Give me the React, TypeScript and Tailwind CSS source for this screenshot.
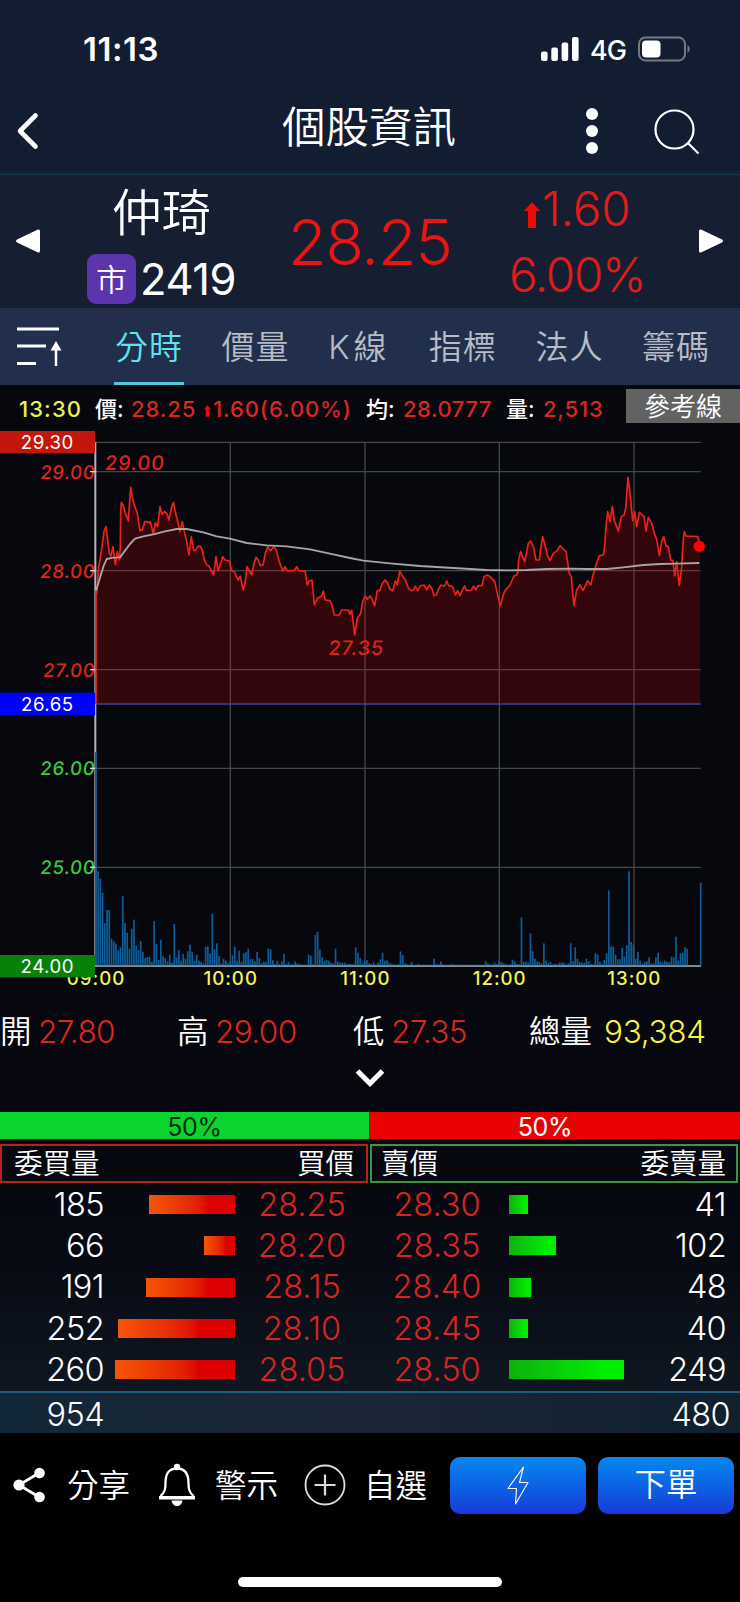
const tabs = ['分時', '價量', 'K線', '指標', '法人', '籌碼'];

const buys = [
  { qty: 185, price: '28.25' },
  { qty: 66, price: '28.20' },
  { qty: 191, price: '28.15' },
  { qty: 252, price: '28.10' },
  { qty: 260, price: '28.05' },
];

const sells = [
  { qty: 41, price: '28.30' },
  { qty: 102, price: '28.35' },
  { qty: 48, price: '28.40' },
  { qty: 40, price: '28.45' },
  { qty: 249, price: '28.50' },
];

// px per lot in the depth bars
const LOT = 0.4635;

// Chart units are 1/3 px
const priceLine =
  '290,645 296,560 300,540 306,500 312,455 318,440 323,480 328,520 333,528 339,500 346,555 352,515 358,540 361,500 362,400 364,367 369,375 376,400 385,422 392,322 399,362 405,380 412,400 420,452 427,450 434,425 440,425 446,428 451,425 460,462 466,428 473,440 480,380 486,403 493,395 500,400 507,420 514,385 520,367 527,400 533,425 540,455 547,425 553,455 560,485 567,525 574,470 581,512 588,510 594,498 602,500 608,515 613,540 620,555 627,558 634,572 641,585 648,530 654,572 662,550 668,530 675,540 688,543 695,572 703,575 709,590 715,600 721,588 729,630 735,610 741,560 755,585 761,555 768,532 775,540 781,557 789,555 796,520 803,500 812,512 822,498 830,515 838,545 848,572 855,560 862,572 882,572 890,560 897,572 915,573 918,590 922,615 928,603 936,600 943,675 952,655 965,648 970,633 976,660 990,662 996,675 1003,705 1018,705 1025,690 1046,690 1050,703 1055,690 1064,765 1072,715 1082,700 1088,665 1096,648 1102,658 1110,648 ' +
  '1115,655 1124,677 1132,632 1139,632 1146,612 1155,600 1162,608 1170,628 1178,632 1186,603 1192,615 1199,573 1208,590 1215,597 1225,625 1234,632 1240,630 1246,618 1253,632 1260,618 1272,615 1280,630 1288,615 1295,625 1302,647 1309,645 1315,628 1323,615 1334,618 1340,603 1346,617 1358,620 1366,645 1373,632 1380,647 1387,630 1394,618 1400,632 1414,630 1421,618 1427,630 1434,617 1446,617 1452,590 1462,585 1470,590 1484,605 1492,640 1501,677 1508,650 1515,632 1530,615 1542,588 1550,585 1554,575 1556,540 1562,515 1574,545 1585,490 1592,483 1600,500 1608,540 1618,540 1623,500 1628,470 1634,492 1642,525 1650,542 1660,520 1672,512 1680,497 1690,508 1698,515 1708,580 1714,590 1717,630 1722,677 1730,630 1740,615 1749,632 1763,602 1772,615 1778,590 1788,555 1798,527 1810,525 1814,500 1818,440 1823,395 1830,425 1837,380 1843,422 1855,453 1864,410 1872,405 1877,385 1884,292 1890,340 1898,422 1904,395 1910,440 1918,397 1926,405 1932,408 1938,453 1945,412 1955,430 1963,460 1970,478 1978,527 1985,485 1991,470 1998,497 2005,500 2012,540 2019,542 2024,588 2030,545 2038,617 2045,560 2050,475 2053,455 2058,468 2093,470 2098,485';

const avgLine =
  '288,632 295,610 310,560 320,537 340,533 360,532 375,512 390,492 405,476 430,469 460,463 495,454 530,447 560,447 610,457 650,469 690,476 740,489 800,496 860,499 930,508 1000,523 1050,534 1090,542 1170,550 1260,558 1360,564 1460,570 1530,571 1580,570 1640,567 1710,566 1760,567 1820,567 1870,562 1930,555 1980,552 2030,551 2098,549';

// One value per minute, 09:00 to 13:30
const volumes = [
  640, 282, 260, 218, 126, 166, 166, 80, 72, 65, 45, 54, 208, 126, 98, 50, 110, 137, 60, 45,
  73, 40, 22, 25, 26, 10, 133, 64, 16, 77, 28, 22, 12, 32, 8, 124, 24, 46, 14, 34,
  20, 42, 62, 40, 14, 32, 14, 10, 6, 56, 57, 36, 155, 48, 66, 28, 6, 20, 14, 6,
  10, 30, 56, 14, 44, 10, 36, 40, 50, 18, 20, 12, 40, 22, 6, 10, 10, 50, 48, 16,
  4, 14, 4, 12, 34, 4, 10, 3, 3, 12, 6, 4, 2, 2, 3, 32, 28, 4, 92, 100,
  48, 24, 12, 16, 14, 8, 6, 50, 12, 8, 8, 8, 4, 4, 4, 4, 54, 38, 22, 6,
  12, 16, 7, 4, 9, 3, 8, 18, 38, 14, 15, 8, 5, 3, 2, 4, 42, 30, 6, 4,
  3, 10, 2, 2, 4, 2, 2, 2, 2, 2, 2, 20, 4, 3, 12, 3, 2, 2, 2, 4,
  2, 2, 2, 2, 2, 2, 2, 2, 2, 2, 2, 2, 2, 2, 13, 6, 3, 3, 8, 4,
  14, 10, 6, 4, 2, 3, 17, 12, 4, 4, 144, 10, 10, 8, 96, 42, 20, 12, 10, 6,
  66, 14, 7, 10, 3, 5, 3, 8, 8, 8, 3, 6, 66, 12, 54, 20, 10, 8, 7, 20,
  12, 4, 3, 36, 32, 10, 4, 16, 36, 225, 56, 56, 32, 18, 18, 52, 26, 60, 282, 70,
  62, 20, 40, 14, 5, 10, 12, 24, 6, 6, 24, 38, 12, 8, 14, 10, 10, 26, 24, 86,
  14, 36, 38, 54, 50, 0, 0, 0, 0, 0, 248,
];

const axis = [
  { label: '29.00', y: 275, color: '#e2231d' },
  { label: '28.00', y: 572, color: '#e2231d' },
  { label: '27.00', y: 869, color: '#e2231d' },
  { label: '26.00', y: 1165, color: '#3cc844' },
  { label: '25.00', y: 1462, color: '#3cc844' },
];

const tags = [
  { label: '29.30', y: 153, color: '#c4170b' },
  { label: '26.65', y: 938, color: '#0000ff' },
  { label: '24.00', y: 1725, color: '#078207' },
];

const hours = [
  { label: '09:00', x: 288 },
  { label: '10:00', x: 692 },
  { label: '11:00', x: 1096 },
  { label: '12:00', x: 1499 },
  { label: '13:00', x: 1903 },
];

function UpArrow({ className }: { className?: string }) {
  return (
    <svg viewBox="0 0 16 26" className={className} fill="#f00b0b">
      <path d="M8 0 16 9H12V26H4V9H0Z" />
    </svg>
  );
}

function StatusBar() {
  return (
    <div className="flex h-[86px] items-start pt-[34px]">
      <span className="mt-[-1px] ml-[83px] w-[120px] text-[33px] leading-8 font-semibold tracking-[0.5px]">11:13</span>
      <svg viewBox="0 0 39 24" className="mt-[3px] ml-[338px] h-6 w-[39px]" fill="#fff">
        <rect x="0" y="14.5" width="6.6" height="9.5" rx="2" />
        <rect x="10.3" y="10.5" width="6.6" height="13.5" rx="2" />
        <rect x="20.6" y="5.5" width="6.6" height="18.5" rx="2" />
        <rect x="31" y="0" width="6.6" height="24" rx="2" />
      </svg>
      <span className="ml-[10px] w-[37px] text-[27px] leading-[34px] font-medium tracking-[-1px]">4G</span>
      <svg viewBox="0 0 54 26" className="mt-[2px] ml-[11px] h-[26px] w-[54px]" fill="none">
        <rect x="1" y="1.5" width="46" height="23" rx="6.5" stroke="#737986" strokeWidth="2" />
        <rect x="4" y="4.5" width="18.5" height="17" rx="4" fill="#fff" />
        <path d="M49.5 9Q54 13 49.5 17Z" fill="#737986" />
      </svg>
    </div>
  );
}

function Header() {
  return (
    <div className="flex h-[89px] items-start border-b-2 border-[#12304a]">
      <svg viewBox="0 0 24 38" className="mt-[26px] ml-[16px] h-[38px] w-6" fill="none" stroke="#fff" strokeWidth="4.6" strokeLinecap="round" strokeLinejoin="round">
        <path d="M19.5 3.5 4 19 19.5 34.5" />
      </svg>
      <h1 className="mt-[19px] ml-[242px] w-[176px] text-[43.5px] leading-[44px] font-[350] whitespace-nowrap">個股資訊</h1>
      <svg viewBox="0 0 12 48" className="mt-[21px] ml-[128px] h-12 w-3" fill="#fff">
        <circle cx="6" cy="7" r="6" />
        <circle cx="6" cy="24" r="6" />
        <circle cx="6" cy="41" r="6" />
      </svg>
      <svg viewBox="0 0 46 46" className="mt-[23px] ml-[56px] h-[46px] w-[46px]" fill="none" stroke="#fff" strokeWidth="2.2">
        <circle cx="20.5" cy="20.5" r="19" />
        <path d="m34 34 10.5 10.5" />
      </svg>
    </div>
  );
}

function Quote() {
  return (
    <div className="flex h-[133px] items-center bg-[#161e31]">
      <svg viewBox="0 0 24 24" className="mt-[-2px] ml-4 h-6 w-6" fill="#fff">
        <path d="M22 .5Q24 0 24 2V22Q24 24 22 23.5L1 13.5Q-1 12 1 10.5Z" />
      </svg>
      <div className="ml-[47px] flex w-[152px] flex-col">
        <div className="mt-[-3px] ml-[25px] h-[78px] pt-[14px] text-[49.5px] leading-[49px] font-[350] whitespace-nowrap">仲琦</div>
        <div className="flex h-[52px] items-center">
          <span className="flex h-[50px] w-[49px] items-center justify-center rounded-[9px] bg-[#5c34ad] text-[31px] leading-none font-[350]">市</span>
          <span className="mt-[2px] ml-[4px] text-[43.5px] leading-none tracking-[-0.4px]">2419</span>
        </div>
      </div>
      <span className="mt-[2px] ml-[49px] w-[181px] text-[63px] leading-none font-[350] tracking-[-1.2px] text-[#ea1410]">28.25</span>
      <div className="ml-[40px] flex w-[150px] flex-col text-[#e41a18]">
        <div className="flex h-[66px] items-center pl-[15px]">
          <UpArrow className="mt-[12px] h-[26px] w-4" />
          <span className="ml-[2px] text-[47.5px] leading-none font-[350] tracking-[-0.1px]">1.60</span>
        </div>
        <span className="h-[66px] text-[47.5px] leading-[65px] font-[350] tracking-[-1.2px]">6.00%</span>
      </div>
      <svg viewBox="0 0 24 24" className="mt-[-2px] ml-[40px] h-6 w-6 flex-none" fill="#fff">
        <path d="M2 .5Q0 0 0 2V22Q0 24 2 23.5L23 13.5Q25 12 23 10.5Z" />
      </svg>
    </div>
  );
}

function Tabs() {
  return (
    <div className="flex h-[77px] bg-[#222f4c]">
      <svg viewBox="0 0 46 40" className="mt-[19px] ml-4 h-10 w-[46px] flex-none" fill="none" stroke="#fff" strokeWidth="3">
        <path d="M1 2H43M1 19H30M1 36.5H20" />
        <path d="M40 39V20" strokeWidth="2.5" />
        <path d="M40 14 45.5 23.5H34.5Z" fill="#fff" stroke="none" />
      </svg>
      <div className="ml-[52px] flex gap-[36.6px] text-[33px] font-[350] whitespace-nowrap text-[#b8bcc5]">
        {tabs.map((tab, i) => (
          <span
            key={tab}
            className={
              i === 0
                ? 'w-[70px] border-b-[3px] border-[#4fc9dd] pt-[21px] pl-[1px] leading-9 tracking-[1px] text-[#5fe3f3]'
                : i === 2
                  ? 'w-[64px] pt-[21px] pl-[1px] leading-9 tracking-[4px]'
                  : 'w-[70px] pt-[21px] pl-[1px] leading-9 tracking-[1px]'
            }
          >
            {tab}
          </span>
        ))}
      </div>
    </div>
  );
}

function Chart() {
  return (
    <svg viewBox="0 153 2220 1707" className="block h-[569px] w-[740px]">
      <g stroke="#45474b" strokeWidth="4">
        {[187, 275, 572, 869, 1165, 1462].map((y) => (
          <path key={y} d={`M287 ${y}H2102`} />
        ))}
        {[691, 1095, 1498, 1902].map((x) => (
          <path key={x} d={`M${x} 187V1758`} />
        ))}
      </g>
      <path d="M286 187V1758" stroke="#b5b5b8" strokeWidth="6" />
      <path d="M284 1758H2103" stroke="#b5b5b8" strokeWidth="5" />
      <polygon points={`290,972 ${priceLine} 2100,500 2100,972`} fill="#ff0000" fillOpacity=".18" />
      <path d="M287 972H2102" stroke="#454296" strokeWidth="5" />
      <path d="M288 972V630" stroke="#e01c18" strokeWidth="5" />
      <polyline points={priceLine} fill="none" stroke="#ef211b" strokeWidth="5" strokeLinejoin="round" />
      <polyline points={avgLine} fill="none" stroke="#a9a5a6" strokeWidth="5.5" strokeLinejoin="round" />
      <circle cx="2098" cy="499" r="17" fill="#f50505" />
      {volumes.map((v, i) => (
        <rect key={i} x={285 + i * 6.72} y={1756 - v} width="5.2" height={v} fill="#0c5c97" />
      ))}
      <g fontSize="56" fontWeight="450" textAnchor="end" letterSpacing="2">
        {axis.map((a) => (
          <g key={a.label}>
            <text transform={`translate(285 ${a.y + 21}) skewX(-6)`} fill={a.color}>
              {a.label}
            </text>
            <path d={`M270 ${a.y}H286`} stroke="#d5d5d5" strokeWidth="4" />
          </g>
        ))}
      </g>
      <g fontSize="60" fontWeight="450" fill="#dd211c" letterSpacing="2.5">
        <text transform="translate(313 269) skewX(-6)">29.00</text>
        <text transform="translate(983 826) skewX(-6)">27.35</text>
      </g>
      <g fontSize="56" fontWeight="500" fill="#f3f35a" textAnchor="middle" letterSpacing="3">
        {hours.map((h) => (
          <text key={h.label} x={h.x} y="1814">
            {h.label}
          </text>
        ))}
      </g>
      {tags.map((t) => (
        <g key={t.label}>
          <rect x="0" y={t.y} width="285" height="67" fill={t.color} />
          <text x="142" y={t.y + 55} fontSize="56" fill="#fff" textAnchor="middle" letterSpacing="1.5">
            {t.label}
          </text>
        </g>
      ))}
    </svg>
  );
}

function ChartInfo() {
  return (
    <div className="flex h-[46px] items-start text-[22px] leading-7 font-medium whitespace-nowrap text-[#dd2521]">
      <span className="mt-[10px] ml-[19px] w-[76px] tracking-[1.1px] text-[#e9f04a]">13:30</span>
      <span className="mt-[10px] w-[36px] text-white">價:</span>
      <span className="mt-[10px] w-[73px] tracking-[0.9px]">28.25</span>
      <UpArrow className="mt-[20px] h-3 w-[7px]" />
      <span className="mt-[10px] ml-[2px] w-[153px] tracking-[0.9px]">1.60(6.00%)</span>
      <span className="mt-[10px] w-[37px] text-white">均:</span>
      <span className="mt-[10px] w-[103px] tracking-[0.5px]">28.0777</span>
      <span className="mt-[10px] w-[37px] text-white">量:</span>
      <span className="mt-[10px] w-[83px] tracking-[0.8px]">2,513</span>
      <button className="mt-[4px] h-[34px] flex-1 bg-[#626262] text-[26px] leading-[36px] font-[350] text-white">參考線</button>
    </div>
  );
}

function Summary() {
  return (
    <div className="flex h-[112px] flex-col bg-[#06070f]">
      <div className="flex h-[64px] items-center text-[31.5px] leading-none font-[350] whitespace-nowrap">
        <span className="w-[38px]">開</span>
        <span className="w-[139px] tracking-[-0.6px] text-[#dd2521]">27.80</span>
        <span className="w-[38px]">高</span>
        <span className="w-[138px] tracking-[-0.6px] text-[#dd2521]">29.00</span>
        <span className="w-[38px]">低</span>
        <span className="w-[138px] tracking-[-0.6px] text-[#dd2521]">27.35</span>
        <span className="w-[75px]">總量</span>
        <span className="tracking-[-0.3px] text-[#f5f53a]">93,384</span>
      </div>
      <svg viewBox="0 0 30 20" className="mx-auto mt-[4px] h-5 w-[30px]" fill="none" stroke="#fff" strokeWidth="5">
        <path d="M2.5 3 15 15.5 27.5 3" />
      </svg>
    </div>
  );
}

function Depth() {
  return (
    <div className="bg-linear-to-b from-[#05060d] via-[#080b14] to-[#111c27]">
      <div className="flex h-[27px] text-center text-[25px] leading-[31px] font-[370]">
        <span className="w-[369px] bg-[#09d52e] pl-[20px] tracking-[-0.3px] text-[#06280c]">50%</span>
        <span className="flex-1 bg-[#ea0000] pr-[19px] tracking-[-0.3px]">50%</span>
      </div>
      <div className="mt-[5px] flex h-[39px] gap-[2px] pr-[2px] text-[28.5px] leading-[36px] font-[350]">
        <div className="flex w-[368px] justify-between border-2 border-[#b8201f] pr-[12px] pl-[12px]">
          <span>委買量</span>
          <span>買價</span>
        </div>
        <div className="flex w-[368px] justify-between border-2 border-[#2f9a40] pr-[10px] pl-[9px]">
          <span>賣價</span>
          <span>委賣量</span>
        </div>
      </div>
      <div className="h-[208px] pt-[1px] text-[32.5px] leading-none font-[350]">
        {buys.map((buy, i) => (
          <div key={buy.price} className="flex h-[41.3px] items-center">
            <span className="w-[104px] pt-[1px] text-right tracking-[-0.6px]">{buy.qty}</span>
            <div className="flex w-[131px] justify-end">
              <div className="h-[19px] bg-linear-to-r from-[#f75408] to-[#dc0000] to-70%" style={{ width: buy.qty * LOT }} />
            </div>
            <span className="w-[134px] pt-[1px] text-center text-[#d82422]">{buy.price}</span>
            <span className="w-[140px] pt-[1px] pr-[4px] text-center text-[#d82422]">{sells[i].price}</span>
            <div className="w-[131px]">
              <div className="h-[19px] bg-linear-to-r from-[#0db10d] to-[#00ef00] to-85%" style={{ width: sells[i].qty * LOT }} />
            </div>
            <span className="w-[86px] pt-[1px] text-right tracking-[-0.6px]">{sells[i].qty}</span>
          </div>
        ))}
      </div>
      <div className="flex h-[42px] items-center justify-between border-t-2 border-[#235a80] bg-linear-to-r from-[#122737] via-[#1b2638] to-[#10202f] pt-[5px] text-[32.5px] leading-none font-[350]">
        <span className="w-[104px] text-right tracking-[-0.6px]">954</span>
        <span className="w-[100px] pr-[10px] text-right tracking-[-0.6px]">480</span>
      </div>
    </div>
  );
}

function ActionBar() {
  return (
    <div className="flex h-[104px] items-center text-[31.5px] leading-none font-[350] whitespace-nowrap">
      <svg viewBox="0 0 34 38" className="ml-3 h-[38px] w-[34px]" fill="#fff" stroke="#fff">
        <path d="M27 7 7 19 27 31" fill="none" strokeWidth="2.8" />
        <circle cx="27.5" cy="7" r="5.3" stroke="none" />
        <circle cx="7" cy="19" r="5.6" stroke="none" />
        <circle cx="27.5" cy="31" r="5.3" stroke="none" />
      </svg>
      <span className="mt-[2px] ml-[21px] w-[63px]">分享</span>
      <svg viewBox="0 0 40 44" className="ml-[27px] h-[44px] w-10" fill="none" stroke="#fff" strokeWidth="2.3">
        <path d="M2 34.7H38" strokeWidth="3.4" />
        <path d="M3.5 33C8 29 8.5 26 8.5 20 8.5 10 12 5.5 20 5.5S31.5 10 31.5 20C31.5 26 32 29 36.5 33" />
        <path d="M14.5 37.5h11c-.5 3.5-2.5 5.5-5.5 5.5s-5-2-5.500-5.500Z" fill="#fff" stroke="none" />
        <circle cx="20" cy="4" r="3.2" fill="#fff" stroke="none" />
      </svg>
      <span className="mt-[2px] ml-[18px] w-[63px]">警示</span>
      <svg viewBox="0 0 42 42" className="ml-[26px] h-[42px] w-[42px]" fill="none" stroke="#ddd" strokeWidth="1.8">
        <circle cx="21" cy="21" r="19.5" />
        <path d="M21 10.5V31.5M10.5 21H31.5" strokeWidth="2.2" />
      </svg>
      <span className="mt-[2px] ml-[18px] w-[63px]">自選</span>
      <button className="ml-[23px] flex h-[57px] w-[136px] items-center justify-center rounded-[10px] bg-linear-to-b from-[#0b87ee] to-[#1938d8]">
        <svg viewBox="0 0 22 40" className="h-10 w-[22px]" fill="none" stroke="#fff" strokeWidth="1.1" strokeLinejoin="round">
          <path d="M16.5 2 1 23.5H9.5L8.5 39 21 17.5H12.5Z" />
        </svg>
      </button>
      <button className="ml-3 h-[57px] w-[136px] rounded-[10px] bg-linear-to-b from-[#0b87ee] to-[#1938d8]">下單</button>
    </div>
  );
}

export default function App() {
  return (
    <div className="h-[1602px] w-[740px] overflow-hidden bg-black font-['Inter','Noto_Sans_CJK_TC',sans-serif] text-white">
      <div className="bg-[#131d31]">
        <StatusBar />
        <Header />
      </div>
      <Quote />
      <Tabs />
      <div className="bg-[#06080d]">
        <ChartInfo />
        <Chart />
      </div>
      <Summary />
      <Depth />
      <ActionBar />
      <div className="mx-auto mt-[40px] h-[10px] w-[264px] rounded-full bg-white" />
    </div>
  );
}
